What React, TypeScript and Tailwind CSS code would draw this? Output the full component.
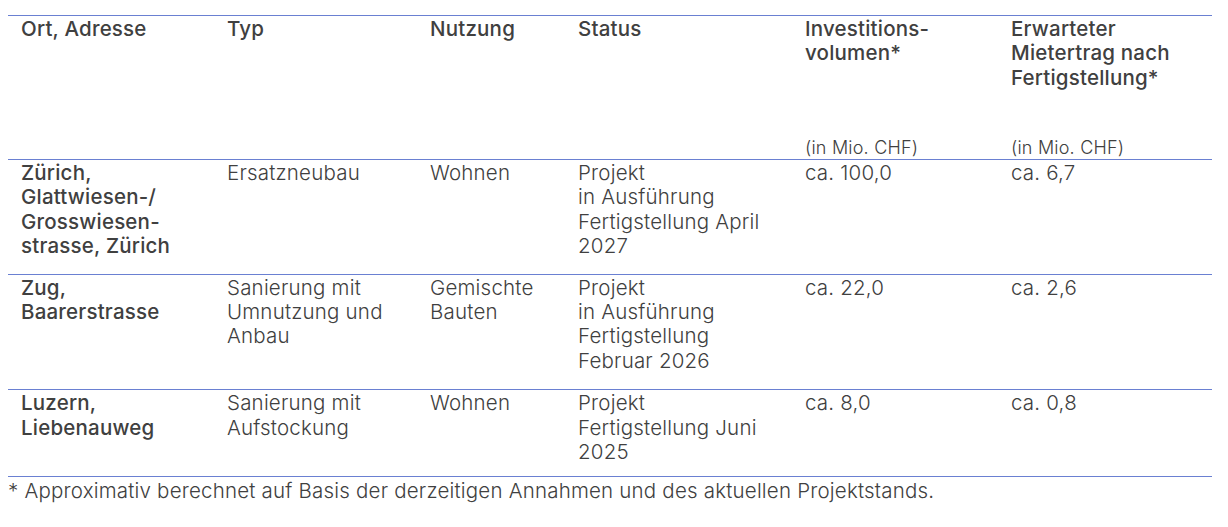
const cols = "grid grid-cols-[219px_203px_148px_227px_206px_201px]";

type Row = {
  ort: string[];
  typ: string[];
  nutzung: string[];
  status: string[];
  invest: string;
  ertrag: string;
  pb: string;
};

const rows: Row[] = [
  {
    ort: ["Zürich,", "Glattwiesen-/", "Grosswiesen-", "strasse, Zürich"],
    typ: ["Ersatzneubau"],
    nutzung: ["Wohnen"],
    status: ["Projekt", "in Ausführung", "Fertigstellung April", "2027"],
    invest: "ca. 100,0",
    ertrag: "ca. 6,7",
    pb: "pb-[15px]",
  },
  {
    ort: ["Zug,", "Baarerstrasse"],
    typ: ["Sanierung mit", "Umnutzung und", "Anbau"],
    nutzung: ["Gemischte", "Bauten"],
    status: ["Projekt", "in Ausführung", "Fertigstellung", "Februar 2026"],
    invest: "ca. 22,0",
    ertrag: "ca. 2,6",
    pb: "pb-[16px]",
  },
  {
    ort: ["Luzern,", "Liebenauweg"],
    typ: ["Sanierung mit", "Aufstockung"],
    nutzung: ["Wohnen"],
    status: ["Projekt", "Fertigstellung Juni", "2025"],
    invest: "ca. 8,0",
    ertrag: "ca. 0,8",
    pb: "pb-[12px]",
  },
];

const Lines = ({ items }: { items: string[] }) => (
  <>
    {items.map((t, i) => (
      <div key={i}>{t}</div>
    ))}
  </>
);

export default function App() {
  return (
    <div
      className="bg-white w-[1228px] h-[527px] pt-[15px] text-[#404040] text-[20.5px] leading-[24.4px] tracking-[0.2px]"
      style={{ fontFamily: "Inter, 'Noto Sans', sans-serif" }}
    >
      <div className="ml-[8px] w-[1204px]">
        {/* Kopfzeile */}
        <div className={`${cols} border-t border-[#6a80d2] h-[144px] font-medium`}>
          <div className="pl-[13px] pt-[1px]">Ort, Adresse</div>
          <div className="pt-[1px]">Typ</div>
          <div className="pt-[1px]">Nutzung</div>
          <div className="pt-[1px]">Status</div>
          <div className="flex flex-col justify-between pt-[1px]">
            <div>
              <div>Investitions-</div>
              <div>volumen*</div>
            </div>
            <div className="font-light text-[18px] leading-[22px]">(in Mio. CHF)</div>
          </div>
          <div className="flex flex-col justify-between pt-[1px]">
            <div>
              <div>Erwarteter</div>
              <div>Mietertrag nach</div>
              <div>Fertigstellung*</div>
            </div>
            <div className="font-light text-[18px] leading-[22px]">(in Mio. CHF)</div>
          </div>
        </div>

        {rows.map((r, i) => (
          <div key={i} className={`${cols} border-t border-[#6a80d2] pt-[1px] ${r.pb} font-light`}>
            <div className="pl-[13px] font-medium">
              <Lines items={r.ort} />
            </div>
            <div>
              <Lines items={r.typ} />
            </div>
            <div>
              <Lines items={r.nutzung} />
            </div>
            <div>
              <Lines items={r.status} />
            </div>
            <div>{r.invest}</div>
            <div>{r.ertrag}</div>
          </div>
        ))}

        <div className="border-t border-[#6a80d2] pt-[2px] font-light">
          * Approximativ berechnet auf Basis der derzeitigen Annahmen und des aktuellen Projektstands.
        </div>
      </div>
    </div>
  );
}
